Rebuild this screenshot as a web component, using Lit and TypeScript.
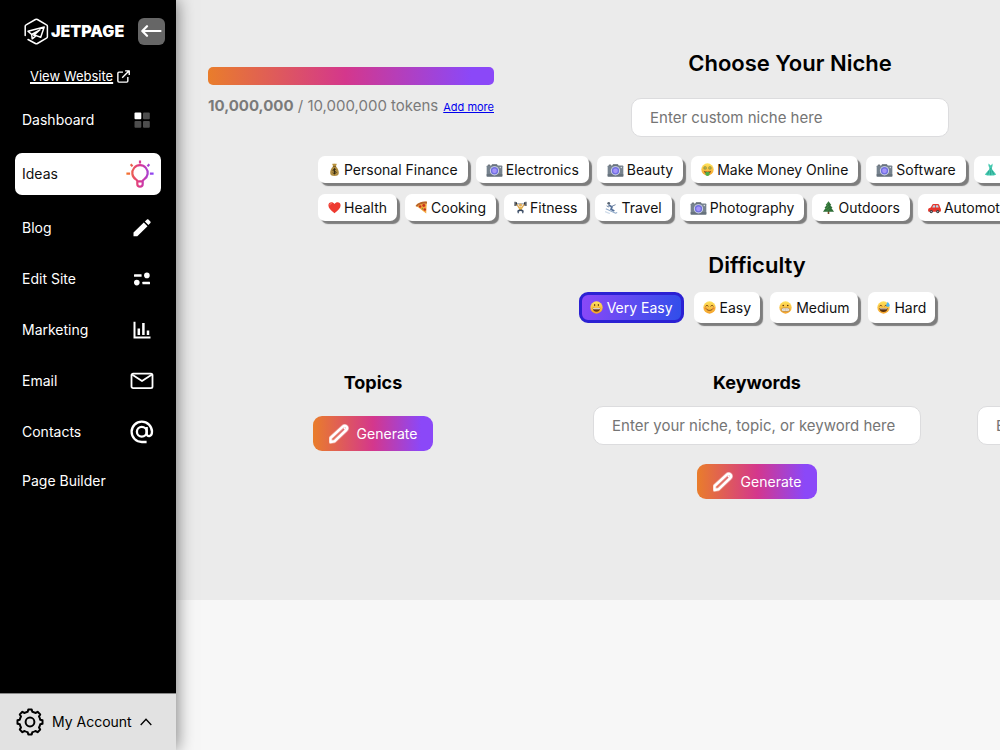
import { LitElement, html, css, svg, nothing } from "lit";
import { customElement, property, state } from "lit/decorators.js";
import { classMap } from "lit/directives/class-map.js";

const face = svg`<circle cx="8" cy="8" r="7.6" fill="url(#faceFill)"/>`;
const faceDefs = svg`<defs><linearGradient id="faceFill" x1="0" y1="0" x2="0" y2="1"><stop offset="0" stop-color="#ffe45c"/><stop offset="1" stop-color="#f5a12a"/></linearGradient></defs>`;

const emoji: Record<string, unknown> = {
  money: svg`<path d="M5.2 1.2c1-.8 1.8.2 2.8-.5 1 .7 2-.3 2.8.5L9.6 4.4H6.4z" fill="#b8913c"/><path d="M6.300 4.400h3.400c2.300 2 3.600 5 3.600 7.600 0 2.800-1.500 4-5.300 4s-5.300-1.200-5.300-4c0-2.600 1.300-5.600 3.600-7.600z" fill="#b08d42"/><path d="M6 4.400h4" stroke="#6a4d14" stroke-width="1"/><path d="M10 8.300c-.5-.8-3.800-1.200-3.900.6 0 1.700 3.900.9 3.900 2.700 0 1.700-3.400 1.500-4.100.4M8 6.400v7.600" fill="none" stroke="#2c240f" stroke-width="1.100"/>`,
  camera: svg`<path d="M7 1.500h6l1 2.200H6z" fill="#59636e"/><rect x=".5" y="3" width="19" height="13.500" rx="1" fill="#76828e"/><rect x=".5" y="13.500" width="19" height="3" fill="#66717c"/><rect x="2" y="2" width="2.600" height="1.200" fill="#444d57"/><circle cx="10" cy="9.500" r="5.600" fill="#d6dce8"/><circle cx="10" cy="9.500" r="4.500" fill="#7070e0"/><circle cx="10" cy="9.500" r="2.800" fill="#a594fb"/><circle cx="17" cy="5.500" r=".8" fill="#e9edf2"/>`,
  rich: svg`${faceDefs}${face}<circle cx="5" cy="6" r="2" fill="#8a8a2c"/><circle cx="11" cy="6" r="2" fill="#8a8a2c"/><path d="M5 4.800v2.400M11 4.800v2.400" stroke="#e4ef9b" stroke-width=".8"/><path d="M3.500 9.500c2 1.500 7 1.500 9 0-.5 2.500-2 3.500-4.500 3.500s-4-1-4.500-3.500z" fill="#7a3b12"/><path d="M5.500 11h5v3.200c0 2.300-5 2.300-5 0z" fill="#4fae4a"/>`,
  dress: svg`<path d="M5.500.5v3L7 7 1 14c3 2 11 2 14 0L9.500 7l1-3.500v-3L8.300 3z" fill="#45c9b0"/><path d="M6.500 7.200h3.200M6 9.500 4.500 14M8.200 9v6M10 9.500l2 4.500" stroke="#1f917f" stroke-width=".8" fill="none"/>`,
  heart: svg`<path d="M8 15C3 11.300.5 8.500.5 5.200.5 1.200 5.800.2 8 3.800 10.200.2 15.500 1.200 15.500 5.200 15.500 8.500 13 11.300 8 15z" fill="#ee3a30"/><path d="M2.300 5.200c0-1.600 1.300-2.400 2.500-2.300" stroke="#ff8d7f" stroke-width="1" fill="none"/>`,
  pizza: svg`<path d="M1 5.500C4 1.800 9 .5 14.500 1l-.7 14.500z" fill="#f2a63d"/><path d="M.6 6.300C3.500 2 9 .2 14.800.8l-.2 2.500C9.500 2.800 5.200 4 2.500 7z" fill="#b5622b"/><circle cx="10.800" cy="5.600" r="1.800" fill="#c8321e"/><circle cx="6.300" cy="6.800" r="1.500" fill="#c8321e"/><circle cx="12" cy="10.500" r="1.600" fill="#c8321e"/><path d="M9 8.500v2" stroke="#57852f"/>`,
  lifter: svg`<path d="M2 3.500h12" stroke="#6b7684" stroke-width="1"/><path d="M1.300.8v5.400M3 1.500v4M13 1.500v4M14.700.8v5.400" stroke="#2d333b" stroke-width="1.400"/><path d="M3.500 4 6 8h4l2.500-4" fill="none" stroke="#dca550" stroke-width="1.600"/><circle cx="8" cy="5" r="1.900" fill="#e3ac55"/><path d="M5.800 7.500h4.400l-.4 3.500H6.200z" fill="#e9b84f"/><path d="M6.200 10.500h3.600L12 12l-.6 3H10l.2-2L8 12.200 5.800 13l.2 2H4.600L4 12z" fill="#33455f"/>`,
  ski: svg`<circle cx="4.600" cy="2.800" r="1.700" fill="#5a6673"/><path d="M4.500 5 8.500 7.300l-1 3 4 2" fill="none" stroke="#56719b" stroke-width="2.200"/><path d="m2 6 3 1.500M8 6.800l5-2.300" stroke="#6a7f9d" stroke-width="1.200" fill="none"/><path d="m1 9.500 12 5.500 2-.8" stroke="#8fa9c8" stroke-width="1.300" fill="none"/><path d="m0 13 6 2.500" stroke="#cfdcea" stroke-width="1.500"/>`,
  tree: svg`<rect x="7" y="12" width="2" height="4" fill="#7a4c26"/><path d="M8 .2 4.500 5h1.300L3 8.700h1.400L1.200 13.300h13.600l-3.200-4.600H13L10.200 5h1.300z" fill="#2f6f38"/><path d="M8 2 6 5.500M8 6 5 10M9 9l-3 3" stroke="#4f9a4a" stroke-width=".9"/>`,
  car: svg`<path d="M.6 9.200 3.400 8l2-3.600c.3-.5.700-.7 1.200-.7h5.600c.8 0 1.200.3 1.500 1L15.200 8.500c.5.500.7 1 .7 2V12c0 .8-.4 1.200-1.200 1.200H1.300c-.8 0-1.200-.5-1.200-1.300 0-1.200 0-2.200.5-2.700z" fill="#e5362c"/><path d="m5.200 8 1.300-2.700h2.200V8zM9.700 8V5.300h2.600l.9 2.700z" fill="#b8d6e8"/><circle cx="4" cy="13" r="2" fill="#3a3d42"/><circle cx="12" cy="13" r="2" fill="#3a3d42"/><circle cx="4" cy="13" r=".8" fill="#ccc"/><circle cx="12" cy="13" r=".8" fill="#ccc"/>`,
  grin: svg`${faceDefs}${face}<ellipse cx="5.700" cy="5" rx=".8" ry="1.400" fill="#6b3c12"/><ellipse cx="10.300" cy="5" rx=".8" ry="1.400" fill="#6b3c12"/><path d="M3.400 8.300c3 .6 6.200.6 9.200 0 0 3.100-1.800 4.900-4.600 4.900s-4.600-1.800-4.600-4.900z" fill="#6b3c12"/><path d="M3.800 8.700c2.500.5 6 .5 8.400 0l-.4 1.600H4.200z" fill="#fff"/>`,
  smile: svg`${faceDefs}${face}<path d="M3.500 6.300c.6-1.500 2.200-1.500 2.800 0M9.700 6.300c.6-1.500 2.200-1.500 2.800 0M4 9.700c2 2.600 6 2.600 8 0" fill="none" stroke="#6b3c12" stroke-width="1.100" stroke-linecap="round"/><circle cx="3" cy="9" r="1.500" fill="#f0762e" opacity=".5"/><circle cx="13" cy="9" r="1.500" fill="#f0762e" opacity=".5"/>`,
  grimace: svg`${faceDefs}${face}<circle cx="5.200" cy="5.500" r="1" fill="#5a3210"/><circle cx="10.800" cy="5.500" r="1" fill="#5a3210"/><rect x="3" y="8.700" width="10" height="4" rx="2" fill="#fff" stroke="#9a6a2c" stroke-width=".7"/><path d="M3.500 10.700h9M6 9v3.500M8 9v3.500M10 9v3.500" stroke="#b9a98c" stroke-width=".5"/>`,
  sweat: svg`${faceDefs}${face}<path d="M3.300 6.500c.6-1.500 2.200-1.500 2.800 0M9.500 6.500c.6-1.500 2.200-1.500 2.800 0" fill="none" stroke="#5a3210" stroke-width="1.100"/><path d="M3 8.500c3 .6 7 .6 10 0 0 3.200-2 5-5 5s-5-1.800-5-5z" fill="#5a3210"/><path d="M3.800 9c2.500.5 6 .5 8.400 0l-.4 1.300H4.200z" fill="#fff"/><path d="M13.200.8c1.600 2.200 2.400 3 2.400 4.300 0 2.700-4.300 2.700-4.300 0 0-1.300.8-2.100 1.900-4.300z" fill="#4db8f0"/>`,
};

const icons: Record<string, unknown> = {
  dashboard: svg`<svg width="16" height="16" viewBox="0 0 16 16"><rect x=".5" y=".5" width="6.800" height="6.800" rx="1" fill="#fff"/><rect x="9" y=".5" width="6.800" height="6.800" rx="1" fill="#4d4d4d"/><rect x=".5" y="9" width="6.800" height="6.800" rx="1" fill="#4d4d4d"/><rect x="9" y="9" width="6.800" height="6.800" rx="1" fill="#4d4d4d"/></svg>`,
  ideas: svg`<svg width="28" height="28" viewBox="0 0 28 28" fill="none" stroke="url(#bulb)" stroke-width="2.200"><defs><linearGradient id="bulb" gradientUnits="userSpaceOnUse" x1="1" y1="0" x2="27" y2="0"><stop offset="0" stop-color="#f5762a"/><stop offset=".5" stop-color="#dc3691"/><stop offset="1" stop-color="#8b48f8"/></linearGradient></defs><path d="M11.300 21.300c0-1-.4-1.300-1.400-1.900a7.700 7.700 0 1 1 8.200 0c-1 .6-1.400.9-1.400 1.900v2.700a2.700 2.700 0 0 1-5.400 0zM11.300 21.400h5.400"/><path d="M.4 13.600h3.700M23.900 13.600h3.700M14 .6v3M4.700 4.300l1.800 2.100M23.300 4.300l-1.800 2.100"/></svg>`,
  blog: svg`<svg width="18" height="18" viewBox="0 0 18 18" fill="#fff"><path d="M.5 13.600 10.800 3.500l3.700 3.700L4.300 17.300H.5zM11.900 2.500 14 .5c.4-.4 1-.4 1.400 0l2 2c.4.4.4 1 0 1.400l-2 2.100z"/></svg>`,
  edit: svg`<svg width="18" height="14" viewBox="0 0 18 14" fill="#fff"><rect x="1" y="2.200" width="7.600" height="2.500" rx=".5"/><circle cx="13.900" cy="3.400" r="2.800"/><circle cx="3.800" cy="10.600" r="2.800"/><rect x="9.400" y="9.700" width="7.600" height="2.500" rx=".5"/></svg>`,
  marketing: svg`<svg width="18" height="18" viewBox="0 0 18 18" fill="none" stroke="#fff"><path d="M1.500 .8v15.700H17.500" stroke-width="2"/><path d="M5.800 14V7.500M10.400 14V2M15 14V9.500" stroke-width="2.500"/></svg>`,
  email: svg`<svg width="24" height="18" viewBox="0 0 24 18" fill="none" stroke="#fff" stroke-width="1.800" stroke-linejoin="round"><rect x="1.500" y="1.600" width="21" height="14.600" rx="1.600"/><path d="m2 2.500 10 6.500 10-6.500"/></svg>`,
  contacts: svg`<svg width="24" height="24" viewBox="0 0 24 24" fill="none" stroke="#fff" stroke-width="2.300"><circle cx="11.800" cy="11.800" r="4.900"/><path d="M16.700 6.900v6.600c0 3.800 5.300 3.700 5.300-1.700A10.200 10.200 0 1 0 11.800 22h4.800"/></svg>`,
};

interface Item { label: string; icon?: string }

@customElement("nav-item")
class NavItem extends LitElement {
  @property() label = "";
  @property() icon = "";
  @property({ type: Boolean, reflect: true }) active = false;

  static styles = css`
    :host { display: block; }
    :host([active]) { margin: 3px 0; }
    .link {
      display: flex; align-items: center; justify-content: space-between;
      min-height: 38px; padding: 0 7px; border-radius: 7px;
      color: #fff; font-size: 14px; line-height: 20px; text-decoration: none;
    }
    .with-icon { min-height: 42px; }
    .active { background: #fff; color: #111; }
    .glyph { display: flex; justify-content: center; width: 24px; }
    .active .glyph { width: 28px; }
    svg { flex: none; }
  `;

  render() {
    return html`<a href="#" class=${classMap({ link: true, "with-icon": !!this.icon, active: this.active })}>
      <span>${this.label}</span>
      ${this.icon ? html`<span class="glyph">${icons[this.icon]}</span>` : nothing}
    </a>`;
  }
}

@customElement("pick-chip")
class PickChip extends LitElement {
  @property() label = "";
  @property() icon = "";
  @property({ type: Boolean }) selected = false;
  @property({ type: Boolean }) tall = false;

  static styles = css`
    :host { display: block; }
    .chip {
      display: flex; align-items: center; gap: 3px; height: 27px; padding: 0 10px;
      border: 0; border-radius: 7px; background: #fff; color: #111;
      box-shadow: 3px 3px 1px #7d7d7d; font: 14px/20px Inter, sans-serif; white-space: nowrap;
    }
    .tall { height: 31px; padding: 0 9px; gap: 4px; }
    .selected {
      color: #fff; border: 3px solid #2b21d3; border-radius: 9px; padding: 0 8px;
      background: linear-gradient(100deg, #8b48f8, #304eea); box-shadow: none;
    }
    .emoji { width: 13px; height: 13px; flex: none; }
    .wide { width: 17px; height: 14px; }
  `;

  render() {
    const wide = this.icon === "camera";
    return html`<button type="button" aria-pressed=${this.selected ? "true" : "false"}
      class=${classMap({ chip: true, tall: this.tall, selected: this.selected })}>
      <svg class=${classMap({ emoji: true, wide })} viewBox=${wide ? "0 0 20 17" : "0 0 16 16"} aria-hidden="true">${emoji[this.icon]}</svg>
      <span>${this.label}</span>
    </button>`;
  }
}

@customElement("generate-button")
class GenerateButton extends LitElement {
  static styles = css`
    :host { display: block; }
    .generate {
      display: flex; align-items: center; gap: 8px; height: 35px; padding: 0 16px;
      border: 0; border-radius: 9px; color: #fff; font: 14px/20px Inter, sans-serif;
      background: linear-gradient(90deg, #e97d2b, #d4378c 50%, #8b48f8 90%);
    }
  `;
  render() {
    return html`<button type="button" class="generate">
      <svg width="20" height="20" viewBox="0 0 20 20" fill="none" stroke="#fff" stroke-linejoin="round" aria-hidden="true">
        <path d="M1.500 18v-4L13.800 2.700c1.200-1.100 2.400-1.200 3.500-.2 1.300 1.200 1.200 2.400 0 3.500L5.400 17.300z" stroke-width="4" opacity=".35"/>
        <path d="M1.500 18v-4L13.800 2.700c1.200-1.100 2.400-1.200 3.500-.2 1.300 1.200 1.200 2.400 0 3.500L5.400 17.300z" stroke-width="2.400"/>
        <path d="M14.800 3.500l1.800 2" stroke-width="1.500"/>
      </svg>
      <span>Generate</span>
    </button>`;
  }
}

@customElement("app-root")
class AppRoot extends LitElement {
  @state() private menu: Item[] = [
    { label: "Dashboard", icon: "dashboard" },
    { label: "Ideas", icon: "ideas" },
    { label: "Blog", icon: "blog" },
    { label: "Edit Site", icon: "edit" },
    { label: "Marketing", icon: "marketing" },
    { label: "Email", icon: "email" },
    { label: "Contacts", icon: "contacts" },
    { label: "Page Builder" },
  ];

  private niches: Item[][] = [
    [
      { label: "Personal Finance", icon: "money" },
      { label: "Electronics", icon: "camera" },
      { label: "Beauty", icon: "camera" },
      { label: "Make Money Online", icon: "rich" },
      { label: "Software", icon: "camera" },
      { label: "Fashion", icon: "dress" },
    ],
    [
      { label: "Health", icon: "heart" },
      { label: "Cooking", icon: "pizza" },
      { label: "Fitness", icon: "lifter" },
      { label: "Travel", icon: "ski" },
      { label: "Photography", icon: "camera" },
      { label: "Outdoors", icon: "tree" },
      { label: "Automotive", icon: "car" },
    ],
  ];

  private levels: Item[] = [
    { label: "Very Easy", icon: "grin" },
    { label: "Easy", icon: "smile" },
    { label: "Medium", icon: "grimace" },
    { label: "Hard", icon: "sweat" },
  ];

  static styles = css`
    :host {
      display: grid; grid-template-columns: 176px minmax(0, 1fr);
      height: 100vh; overflow: hidden; background: #f7f7f7;
      font-family: Inter, sans-serif; color: #000;
    }
    .sidebar {
      display: flex; flex-direction: column; z-index: 1;
      background: #000; box-shadow: 1px 0 16px rgba(0, 0, 0, 0.5);
    }
    .brand { display: flex; align-items: center; justify-content: space-between; padding: 17px 11px 0 24px; }
    .logo { display: flex; align-items: center; gap: 2px; color: #fff; font-size: 16px; line-height: 28px; font-weight: 900; }
    .collapse {
      display: flex; align-items: center; justify-content: center; width: 27px; height: 27px;
      padding: 0; border: 0; border-radius: 6px; background: #666;
    }
    .site {
      display: flex; align-items: center; gap: 4px; margin: 21px 0 13px 30px;
      font-size: 13px; line-height: 20px; color: #fff;
    }
    .site-text { text-decoration: underline; text-underline-offset: 2px; }
    .menu { display: flex; flex-direction: column; gap: 9px; padding: 0 15px; }
    .account {
      display: flex; align-items: center; gap: 8px; margin-top: auto; height: 57px; padding: 0 16px;
      border: 0; border-top: 1px solid #888; background: #e2e2e2; color: #000;
      font: 14px/20px Inter, sans-serif;
    }
    .main { overflow: hidden; }
    .panel { min-width: 1152px; padding: 0 5px 101px; background: #ebebeb; }
    .top { display: flex; gap: 137px; padding: 49px 0 0 27px; }
    .tokens { width: 286px; padding-top: 18px; box-sizing: border-box; }
    .bar {
      height: 18px; border-radius: 5px;
      background: linear-gradient(90deg, #e97d2b, #d4378c 48%, #8b48f8 92%);
    }
    .usage { display: flex; align-items: baseline; justify-content: space-between; margin-top: 11px; font-size: 15px; line-height: 20px; color: #7a7a7a; white-space: nowrap; }
    .more { font-size: 11px; color: #00e; }
    .heading { margin: 0; font-size: 22px; line-height: 28px; font-weight: 600; text-align: center; }
    .custom { width: 318px; }
    .box {
      display: block; box-sizing: border-box; width: 100%; height: 39px; padding: 0 18px;
      border: 1px solid #dcdcde; border-radius: 10px; background: #fff; font: 15px/20px Inter, sans-serif; color: #111;
    }
    .box::placeholder { color: #757575; opacity: 1; }
    .custom .box { margin-top: 21px; }
    .rows { display: flex; flex-direction: column; gap: 11px; width: 878px; margin: 19px auto 0; }
    .row { display: flex; gap: 8px; }
    .difficulty { margin-top: 30px; }
    .levels { display: flex; justify-content: center; gap: 10px; margin-top: 13px; }
    .columns { display: grid; grid-template-columns: repeat(3, 384px); margin-top: 48px; justify-content: center; }
    .column { display: flex; flex-direction: column; align-items: center; padding: 0 28px; }
    .title { margin: 0 0 11px; font-size: 18px; line-height: 24px; font-weight: 700; }
    .column generate-button { margin-top: 19px; }
    .short .title { margin-bottom: 2px; }
    .hidden-label { display: none; }
  `;

  private column(title: string, placeholder?: string) {
    const id = title.toLowerCase();
    return html`<section class=${classMap({ column: true, short: !placeholder })}>
      <h3 class="title">${title}</h3>
      ${placeholder ? html`<label class="hidden-label" for=${id}>${title}</label><input class="box" id=${id} type="text" placeholder=${placeholder} />` : nothing}
      <generate-button></generate-button>
    </section>`;
  }

  render() {
    return html`
      <aside class="sidebar">
        <div class="brand">
          <div class="logo">
            <svg width="25" height="27" viewBox="0 0 25 27" fill="none" stroke="#fff" stroke-width="1.500" stroke-linejoin="round" stroke-linecap="round" aria-hidden="true">
              <path d="M1.200 17.500V8.300c0-.7.300-1.200.9-1.500L11.400 1.500c.7-.4 1.300-.4 2 0l9.100 5.300c.6.300.9.800.9 1.500v10.400c0 .7-.3 1.200-.9 1.500l-9.100 5.300c-.7.400-1.300.4-2 0L4 21.500"/>
              <path d="M4 13.300 20.200 9l-3.500 10.200-4.500-1.600-4 3.200-.5-4.300zM7.700 16.500 16 11.800l-6.200 5.400 2.400.4"/>
            </svg>
            <span>JETPAGE</span>
          </div>
          <button class="collapse" type="button" aria-label="Collapse menu">
            <svg width="21" height="14" viewBox="0 0 21 14" fill="none" stroke="#fff" stroke-width="2.200" stroke-linecap="round" stroke-linejoin="round"><path d="M19.500 7H1.500M6 2.200 1.300 7 6 11.800"/></svg>
          </button>
        </div>
        <a class="site" href="#">
          <span class="site-text">View Website</span>
          <svg width="13" height="13" viewBox="0 0 12 12" fill="none" stroke="#fff" stroke-width="1.300" stroke-linejoin="round" aria-hidden="true"><path d="M5.500 2H1.800c-.6 0-1 .4-1 1v7.200c0 .6.400 1 1 1H9c.6 0 1-.4 1-1V6.500M7.500.8h3.800v3.800M11 1 4.800 7.200"/></svg>
        </a>
        <nav class="menu">
          ${this.menu.map((m) => html`<nav-item label=${m.label} icon=${m.icon ?? ""} ?active=${m.label === "Ideas"}></nav-item>`)}
        </nav>
        <button class="account" type="button">
          <svg width="28" height="28" viewBox="0 0 28 28" fill="none" stroke="#000" stroke-width="2" stroke-linejoin="round" aria-hidden="true">
            <circle cx="14" cy="14" r="4.400"/>
            <path d="M11.700 3.800 12.300 1.500h3.400l.6 2.300c1.200.2 2.100.6 3.100 1.200l2.200-1.200 2.600 2.600L23 8.600c.6 1 1 2 1.200 3.100l2.300.6v3.400l-2.300.6c-.2 1.200-.6 2.100-1.200 3.100l1.200 2.200-2.600 2.600-2.200-1.200c-1 .6-2 1-3.100 1.200l-.6 2.300h-3.400l-.6-2.300c-1.200-.2-2.100-.6-3.100-1.200l-2.200 1.200-2.600-2.600L5 19.400c-.6-1-1-2-1.200-3.100l-2.300-.6v-3.400l2.300-.6c.2-1.200.6-2.100 1.200-3.100L3.800 6.400l2.600-2.600L8.600 5c1-.6 2-1 3.100-1.200z"/>
          </svg>
          <span>My Account</span>
          <svg width="12" height="8" viewBox="0 0 12 8" fill="none" stroke="#000" stroke-width="1.300" aria-hidden="true"><path d="M.7 7 6 1.200 11.300 7"/></svg>
        </button>
      </aside>
      <main class="main">
        <div class="panel">
          <div class="top">
            <div class="tokens">
              <div class="bar"></div>
              <div class="usage">
                <span><b>10,000,000</b> / 10,000,000 tokens</span>
                <a class="more" href="#">Add more</a>
              </div>
            </div>
            <div class="custom">
              <h2 class="heading">Choose Your Niche</h2>
              <label class="hidden-label" for="niche">Custom niche</label>
              <input class="box" id="niche" type="text" placeholder="Enter custom niche here" />
            </div>
          </div>
          <div class="rows">
            ${this.niches.map((row) => html`<div class="row">${row.map((n) => html`<pick-chip label=${n.label} icon=${n.icon!}></pick-chip>`)}</div>`)}
          </div>
          <h2 class="heading difficulty">Difficulty</h2>
          <div class="levels">
            ${this.levels.map((l, i) => html`<pick-chip tall label=${l.label} icon=${l.icon!} ?selected=${i === 0}></pick-chip>`)}
          </div>
          <div class="columns">
            ${this.column("Topics")}
            ${this.column("Keywords", "Enter your niche, topic, or keyword here")}
            ${this.column("Titles", "Enter your niche, topic, or keyword here")}
          </div>
        </div>
      </main>
    `;
  }
}
